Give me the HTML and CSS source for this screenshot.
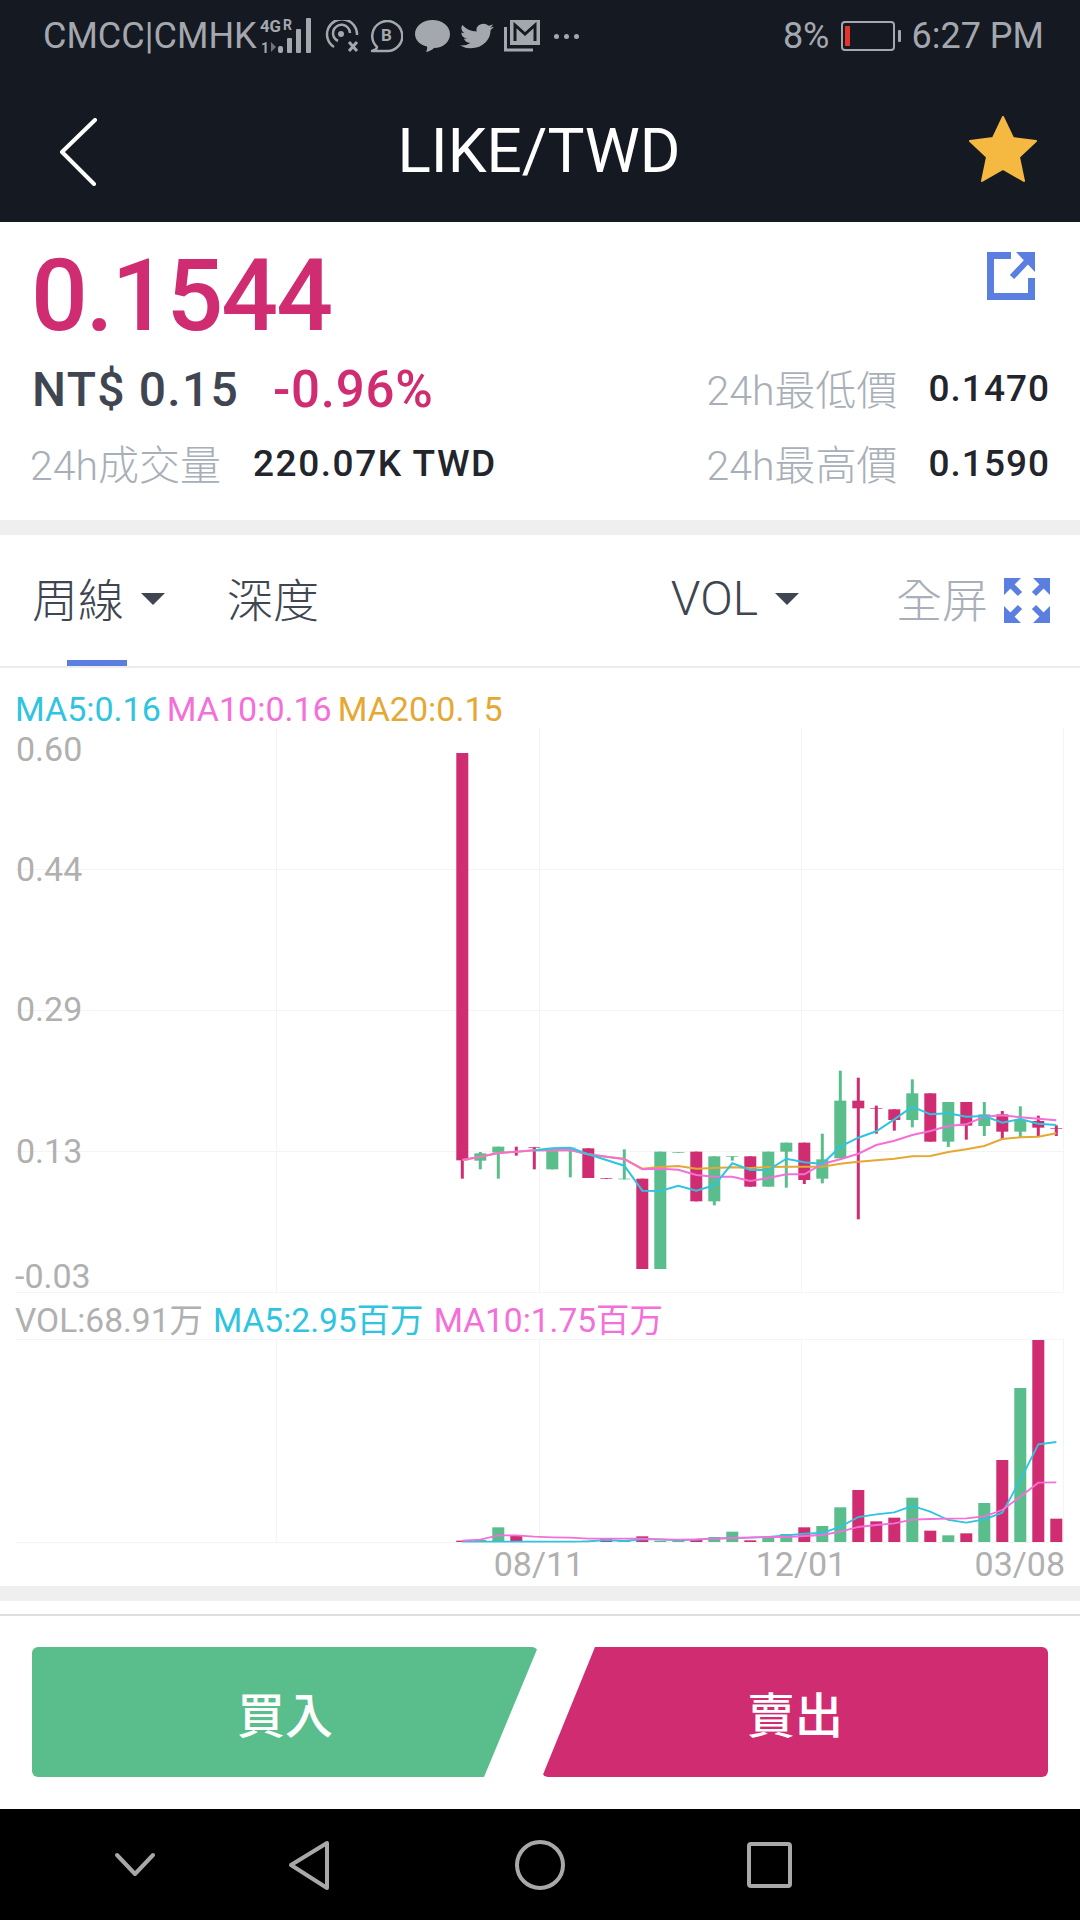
FILE: index.html

```html
<!DOCTYPE html>
<html lang="zh-Hant">
<head>
  <meta charset="UTF-8">
  <meta name="viewport" content="width=device-width, initial-scale=1">
  <title>LIKE/TWD</title>
  <link rel="stylesheet" href="styles.css">
</head>
<body>
  <header class="top">
    <div class="status">
      <div class="status-left">
        <span class="carrier">CMCC|CMHK</span>
        <svg class="ic-signal" width="53" height="44" viewBox="0 -4 53 44">
          <text x="0" y="14" class="sig-text" textLength="21" lengthAdjust="spacingAndGlyphs">4G</text>
          <text x="23" y="12" class="sig-text sig-small">R</text>
          <text x="1" y="35" class="sig-text sig-small">1</text>
          <path d="M11 24v10l5-5z" fill="#6f737a"/>
          <g fill="#a4a8ae">
            <rect x="18" y="28" width="5" height="7" rx="2"/>
            <rect x="27" y="20" width="5" height="15" rx="1"/>
            <rect x="36" y="11" width="5" height="24" rx="1"/>
            <rect x="46" y="0" width="5" height="35" rx="1"/>
          </g>
        </svg>
        <svg class="ic-hot" width="35" height="32" viewBox="0 0 35 32" fill="none" stroke="#a4a8ae" stroke-width="2.5">
          <path d="M9 27a15 15 0 1 1 23-12"/>
          <path d="M13 21a8.500 8.500 0 1 1 12-8"/>
          <circle cx="16" cy="14" r="3" fill="#a4a8ae" stroke="none"/>
          <path d="M24 22l8 9M32 22l-8 9" stroke-width="3"/>
        </svg>
        <svg class="ic-biz" width="33" height="33" viewBox="0 0 33 33" fill="none" stroke="#a4a8ae" stroke-width="2.500">
          <path d="M7 27a15 15 0 1 1 9 4H2c3-1 5-2 5-4z" stroke-linejoin="round"/>
          <text x="16.500" y="21" text-anchor="middle" class="biz-text">B</text>
        </svg>
        <svg class="ic-bubble" width="35" height="32" viewBox="0 0 35 32">
          <path d="M17.500 0C27 0 35 6 35 14s-7 14-16 14c-2 2-5 3.500-8 4 1-2 1.500-4 1-5.500C5 25 0 20 0 14 0 6 8 0 17.500 0z" fill="#a4a8ae"/>
        </svg>
        <svg class="ic-bird" width="34" height="30" viewBox="0 0 24 24" preserveAspectRatio="none">
          <path d="M23.950 4.570a10 10 0 0 1-2.830.78 4.960 4.960 0 0 0 2.170-2.720c-.95.56-2 .96-3.130 1.190a4.920 4.920 0 0 0-8.390 4.490A13.980 13.980 0 0 1 1.640 3.160a4.920 4.920 0 0 0 1.520 6.570 4.900 4.900 0 0 1-2.230-.62v.06a4.920 4.920 0 0 0 3.950 4.830 5 5 0 0 1-2.210.08 4.940 4.940 0 0 0 4.600 3.420A9.870 9.870 0 0 1 0 19.540a14 14 0 0 0 7.560 2.210c9.050 0 14-7.500 14-13.980 0-.21 0-.42-.02-.63a10 10 0 0 0 2.410-2.570z" fill="#a4a8ae"/>
        </svg>
        <svg class="ic-mail" width="36" height="32" viewBox="0 0 36 32">
          <path d="M6 0h30v25H6z" fill="#a4a8ae"/>
          <path d="M11 21V5l10 9 10-9v16" fill="none" stroke="#141922" stroke-width="3"/>
          <path d="M1.500 7v23H29" fill="none" stroke="#a4a8ae" stroke-width="3"/>
        </svg>
        <span class="dots"><i></i><i></i><i></i></span>
      </div>
      <div class="status-right">
        <span>8%</span>
        <svg width="60" height="30" viewBox="0 0 60 30" fill="none">
          <rect x="1" y="1" width="52" height="28" rx="3" stroke="#a4a8ae" stroke-width="2"/>
          <rect x="4" y="5" width="5" height="20" fill="#e5322b"/>
          <rect x="57" y="9" width="3" height="12" rx="1" fill="#a4a8ae"/>
        </svg>
        <span>6:27 PM</span>
      </div>
    </div>
    <nav class="nav">
      <svg class="nav-back" width="40" height="68" viewBox="0 0 40 68" fill="none">
        <path d="M36 2L3 34l32 32" stroke="#fff" stroke-width="4" stroke-linecap="round" stroke-linejoin="round"/>
      </svg>
      <h1>LIKE/TWD</h1>
      <svg class="nav-star" width="68" height="66" viewBox="0 0 68 66">
        <path d="M34 1l10 21 23 3-17 16 5 24-21-12-21 12 5-24L1 25l23-3z" fill="#f5b942" stroke="#f5b942" stroke-width="2" stroke-linejoin="round"/>
      </svg>
    </nav>
  </header>

  <section class="ticker">
    <div class="row row-price">
      <span class="price">0.1544</span>
      <svg class="share" width="48" height="48" viewBox="0 0 48 48" fill="none">
        <path d="M24 3.500H3.500v41h41V26" stroke="#5b7fe0" stroke-width="7"/>
        <path d="M25 25L42 7" stroke="#5b7fe0" stroke-width="6"/>
        <path d="M29 0h19v20z" fill="#5b7fe0"/>
      </svg>
    </div>
    <div class="row">
      <div class="group">
        <span class="fiat">NT$ 0.15</span>
        <span class="change">-0.96%</span>
      </div>
      <div class="stat">
        <span class="label">24h最低價</span>
        <span class="value">0.1470</span>
      </div>
    </div>
    <div class="row">
      <div class="group group-vol">
        <span class="label">24h成交量</span>
        <span class="value value-wide">220.07K TWD</span>
      </div>
      <div class="stat">
        <span class="label">24h最高價</span>
        <span class="value">0.1590</span>
      </div>
    </div>
  </section>

  <div class="band"></div>

  <section class="tabs">
    <div class="tab tab-active">周線<i class="caret"></i></div>
    <div class="tab tab-depth">深度</div>
    <div class="tab tab-vol"><span class="vol-name">VOL</span><i class="caret"></i></div>
    <div class="tab tab-full">全屏
      <svg width="46" height="45" viewBox="0 0 46 45" fill="#5b7fe0" stroke="#5b7fe0">
        <path d="M0 0h17L0 17zM46 0H29l17 17zM0 45h17L0 28zM46 45H29l17-17z" stroke="none"/>
        <path d="M5 5l11 11M41 5L30 16M5 40l11-11M41 40L30 29" stroke-width="6" fill="none"/>
      </svg>
    </div>
  </section>

  <section class="chart">
    <div class="legend">
      <span class="ma5">MA5:0.16</span>
      <span class="ma10">MA10:0.16</span>
      <span class="ma20">MA20:0.15</span>
    </div>
    <svg id="kline" class="plot" width="1080" height="579" viewBox="0 728 1080 579">
      <text x="16" y="761" class="axis">0.60</text>
      <text x="16" y="881" class="axis">0.44</text>
      <text x="16" y="1021" class="axis">0.29</text>
      <text x="16" y="1163" class="axis">0.13</text>
      <text x="15" y="1288" class="axis">-0.03</text>
    </svg>
    <div class="legend legend-vol">
      <span class="vol">VOL:68.91万</span>
      <span class="ma5">MA5:2.95百万</span>
      <span class="ma10">MA10:1.75百万</span>
    </div>
    <svg id="volume" class="plot" width="1080" height="246" viewBox="0 1339 1080 246">
      <text x="539" y="1576" class="axis" text-anchor="middle">08/11</text>
      <text x="801" y="1576" class="axis" text-anchor="middle">12/01</text>
      <text x="1065" y="1576" class="axis" text-anchor="end">03/08</text>
    </svg>
  </section>

  <div class="band band-low"></div>

  <section class="actions">
    <button class="btn btn-buy">買入</button>
    <button class="btn btn-sell">賣出</button>
  </section>

  <footer class="sysnav">
    <svg width="1080" height="112" viewBox="0 1808 1080 112" fill="none" stroke="#a8a8a8" stroke-width="4" stroke-linejoin="round">
      <path d="M117 1854l18 19 18-19" stroke-linecap="round"/>
      <path d="M327 1842v45l-36-23z"/>
      <circle cx="540" cy="1864" r="23"/>
      <rect x="749" y="1843" width="41" height="42" rx="2"/>
    </svg>
  </footer>

  <script src="chart.js"></script>
</body>
</html>
```

FILE: styles.css

```css
* {
  box-sizing: border-box;
}
html, body {
  margin: 0;
  padding: 0;
}
body {
  width: 1080px;
  height: 1920px;
  overflow: hidden;
  background: #fff;
  font-family: Roboto, "Noto Sans CJK TC", sans-serif;
  color: #3f4652;
}

/* top bar */
.top {
  height: 222px;
  background: #141922;
}
.status {
  height: 72px;
  padding: 0 36px 0 43px;
  display: flex;
  justify-content: space-between;
  align-items: center;
  color: #a4a8ae;
  font-size: 36px;
}
.status-left, .status-right {
  display: flex;
  align-items: center;
}
.carrier {
  width: 217px;
  white-space: nowrap;
}
.ic-hot { margin-left: 12px; }
.ic-biz { margin-left: 10px; }
.ic-bubble { margin-left: 12px; }
.ic-bird { margin-left: 10px; }
.ic-mail { margin-left: 10px; }
.sig-text {
  font-size: 17px;
  font-weight: 700;
  fill: #a4a8ae;
}
.sig-small {
  font-size: 14px;
}
.biz-text {
  font-size: 17px;
  font-weight: 700;
  fill: #a4a8ae;
  stroke: none;
}
.dots {
  display: flex;
  gap: 5px;
  margin-left: 14px;
}
.dots i {
  width: 5px;
  height: 5px;
  border-radius: 50%;
  background: #a4a8ae;
}
.status-right {
  gap: 11px;
}
.nav {
  height: 150px;
  padding: 10px 43px 0 59px;
  display: flex;
  align-items: center;
  justify-content: space-between;
}
.nav h1 {
  margin: 0 0 4px 10px;
  font-size: 62px;
  font-weight: 400;
  color: #fff;
}
.nav-star {
  margin-bottom: 6px;
}

/* price block */
.ticker {
  height: 298px;
  padding: 19px 30px 19px 32px;
}
.row {
  height: 75px;
  display: flex;
  align-items: center;
  justify-content: space-between;
}
.row-price {
  height: 110px;
  align-items: flex-start;
}
.price {
  margin-left: -1px;
  font-size: 100px;
  line-height: 110px;
  font-weight: 500;
  letter-spacing: -2px;
  color: #d02c71;
}
.share {
  margin: 11px 15px 0 0;
}
.group, .stat {
  display: flex;
  align-items: center;
}
.group { gap: 34px; }
.group-vol { gap: 32px; margin-left: -2px; }
.stat { gap: 31px; }
.fiat, .change {
  font-weight: 500;
  margin-top: 2px;
}
.fiat {
  font-size: 48px;
  letter-spacing: 1.25px;
}
.change {
  font-size: 51px;
  letter-spacing: 0.75px;
  color: #d02c71;
}
.label {
  margin-bottom: 4px;
  font-size: 41px;
  font-weight: 300;
  color: #a9afb8;
}
.value {
  font-size: 37px;
  font-weight: 500;
  letter-spacing: 1px;
  color: #22252b;
}
.value-wide {
  letter-spacing: 1.55px;
}

.band {
  height: 15px;
  background: #efefef;
}

/* tabs */
.tabs {
  height: 133px;
  padding: 0 30px 8px 32px;
  display: flex;
  align-items: center;
  border-bottom: 2px solid #ececec;
  font-size: 46px;
  font-weight: 300;
  position: relative;
}
.tab {
  display: flex;
  align-items: center;
}
.tab-active::after {
  content: "";
  position: absolute;
  left: 67px;
  bottom: 0;
  width: 60px;
  height: 6px;
  background: #5b7fe0;
}
.caret {
  width: 0;
  height: 0;
  margin: 4px 0 0 17px;
  border-left: 12px solid transparent;
  border-right: 12px solid transparent;
  border-top: 12px solid #3f4652;
}
.tab-depth {
  margin-left: 62px;
}
.tab-vol {
  margin-left: auto;
}
.vol-name {
  padding-top: 4px;
  font-size: 48px;
}
.tab-full {
  margin-left: 97px;
  gap: 16px;
  color: #a9afb8;
}
.tab-full svg {
  margin-top: 8px;
}

/* chart */
.chart {
  height: 919px;
}
.legend {
  height: 60px;
  padding: 22px 0 0 15px;
  display: flex;
  align-items: center;
  gap: 6px;
  font-size: 34px;
}
.ma5 { color: #2fc4e0; }
.ma10 { color: #f46fd8; }
.ma20 { color: #e5a833; }
.vol { color: #b0b0b0; }
.legend-vol {
  height: 33px;
  margin-top: -1px;
  padding: 0 0 10px 15px;
  gap: 10px;
  font-size: 33.5px;
}
.plot {
  display: block;
}
.axis {
  font-size: 34px;
  fill: #b0b0b0;
}

.band-low {
  margin-top: -1px;
}

/* buy, sell */
.actions {
  height: 195px;
  padding: 31px 32px 0;
  display: flex;
  gap: 4px;
  border-top: 2px solid #dedede;
  margin-top: 13px;
}
.btn {
  height: 130px;
  border: 0;
  border-radius: 6px;
  color: #fff;
  font-family: inherit;
  font-size: 48px;
  font-weight: 500;
}
.btn-buy {
  width: 506px;
  background: #5abd8c;
  clip-path: polygon(0 0, 100% 0, 452px 100%, 0 100%);
}
.btn-sell {
  width: 506px;
  background: #d02c71;
  clip-path: polygon(53px 0, 100% 0, 100% 100%, 0 100%);
}

.sysnav {
  height: 112px;
  background: #000;
}
.sysnav svg {
  display: block;
}
```

FILE: chart.js

```js
// chart values were read off a 3x crop, so y = base + v / 3
const NS = 'http://www.w3.org/2000/svg';
const RED = '#d02c71', GREEN = '#5abd8c';
const cx = i => 462.3 + 18 * i;
const ky = v => 1040 + v / 3;
const vy = v => 1300 + v / 3;

// [color, wick top, body top, body bottom, wick bottom]
const candles = [
  [RED, -861, -861, 361, 416],
  [GREEN, 336, 340, 362, 388],
  [GREEN, 320, 320, 338, 416],
  [RED, 320, 333, 336, 347],
  [RED, 322, 322, 324, 388],
  [GREEN, 325, 325, 388, 388],
  [GREEN, 323, 323, 325, 412],
  [RED, 325, 325, 414, 414],
  [RED, 414, 414, 416, 416],
  [GREEN, 328, 416, 418, 418],
  [RED, 416, 416, 687, 687],
  [GREEN, 335, 335, 687, 687],
  [GREEN, 336, 336, 338, 338],
  [RED, 335, 335, 484, 484],
  [GREEN, 349, 349, 484, 496],
  [GREEN, 349, 349, 351, 362],
  [RED, 349, 349, 440, 440],
  [GREEN, 335, 335, 440, 440],
  [GREEN, 308, 308, 335, 443],
  [RED, 308, 308, 420, 432],
  [GREEN, 281, 358, 416, 430],
  [GREEN, 92, 182, 355, 355],
  [RED, 113, 182, 205, 538],
  [RED, 197, 205, 207, 281],
  [RED, 208, 208, 240, 272],
  [GREEN, 118, 160, 240, 262],
  [RED, 160, 160, 305, 305],
  [GREEN, 186, 186, 305, 321],
  [RED, 186, 186, 257, 299],
  [GREEN, 186, 223, 258, 288],
  [RED, 213, 223, 275, 298],
  [GREEN, 199, 240, 275, 292],
  [RED, 227, 243, 263, 290],
  [RED, 256, 265, 267, 288]
];

const volumes = [
  [RED, 722], [GREEN, 720], [GREEN, 682], [RED, 708], [RED, 723], [GREEN, 724],
  [GREEN, 723], [GREEN, 722], [RED, 716], [GREEN, 720], [RED, 709], [GREEN, 722],
  [GREEN, 720], [RED, 720], [GREEN, 711], [GREEN, 695], [RED, 721], [GREEN, 711],
  [GREEN, 702], [RED, 682], [GREEN, 678], [GREEN, 622], [RED, 570], [RED, 664],
  [RED, 653], [GREEN, 593], [RED, 692], [GREEN, 706], [RED, 700], [GREEN, 609],
  [RED, 480], [GREEN, 264], [RED, 120], [RED, 656]
];

const orange = [360, 350, 339, 335, 331, 331, 330, 343, 350, 357, 386, 381, 378, 386, 384, 382, 384, 381, 380, 380, 380, 371, 365, 361, 356, 349, 348, 336, 328, 318, 297, 292, 290, 280];
const pinkK = [360, 350, 339, 335, 331, 331, 330, 343, 350, 357, 388, 386, 389, 405, 410, 410, 423, 414, 403, 403, 372, 358, 341, 315, 302, 285, 273, 258, 253, 230, 226, 232, 236, 241];
const cyanK = [null, null, null, null, 331, 325, 323, 343, 360, 377, 452, 453, 437, 452, 436, 370, 390, 390, 356, 367, 372, 320, 293, 274, 238, 200, 223, 220, 230, 228, 248, 237, 251, 255];
const cyanV = [725, 725, 725, 725, 725, 725, 725, 724, 720, 723, 718, 718, 721, 719, 716, 714, 713, 711, 706, 701, 699, 680, 651, 643, 637, 618, 635, 660, 668, 658, 638, 540, 433, 426];
const pinkV = [722, 719, 706, 706, 710, 712, 713, 716, 716, 716, 716, 718, 719, 718, 716, 714, 712, 711, 711, 708, 705, 695, 681, 675, 670, 659, 657, 656, 655, 649, 630, 590, 548, 547];

function add(svg, tag, attrs) {
  const el = document.createElementNS(NS, tag);
  for (const k in attrs) el.setAttribute(k, attrs[k]);
  // grid and bars stay under the axis labels
  svg.insertBefore(el, svg.querySelector('text'));
  return el;
}

function grid(svg, top, bottom, rows) {
  rows.forEach(y => add(svg, 'rect', { x: 16, y: y, width: 1047, height: 1, fill: '#f4f4f4' }));
  [276, 539, 801, 1063].forEach(x => add(svg, 'rect', { x: x, y: top, width: 1, height: bottom - top, fill: '#f4f4f4' }));
}

function line(svg, values, toY, color, width) {
  const pts = [];
  values.forEach((v, i) => { if (v !== null) pts.push(cx(i) + ',' + toY(v).toFixed(1)); });
  add(svg, 'polyline', { points: pts.join(' '), fill: 'none', stroke: color, 'stroke-width': width });
}

const kline = document.getElementById('kline');
grid(kline, 727, 1292, [727, 869, 1010, 1151, 1292]);
candles.forEach((c, i) => {
  add(kline, 'rect', { x: cx(i) - 1.5, y: ky(c[1]), width: 3, height: ky(c[4]) - ky(c[1]), fill: c[0] });
  add(kline, 'rect', { x: cx(i) - 6, y: ky(c[2]), width: 12, height: ky(c[3]) - ky(c[2]), fill: c[0] });
});
line(kline, orange, ky, '#e5a833', 2);
line(kline, pinkK, ky, '#f46fd8', 2);
line(kline, cyanK, ky, '#2fc4e0', 2);

const volume = document.getElementById('volume');
grid(volume, 1339, 1542, [1339, 1542]);
volumes.forEach((v, i) => {
  add(volume, 'rect', { x: cx(i) - 6, y: vy(v[1]), width: 12, height: vy(726) - vy(v[1]), fill: v[0] });
});
line(volume, cyanV, vy, '#2fc4e0', 1.8);
line(volume, pinkV, vy, '#f46fd8', 1.8);
```
